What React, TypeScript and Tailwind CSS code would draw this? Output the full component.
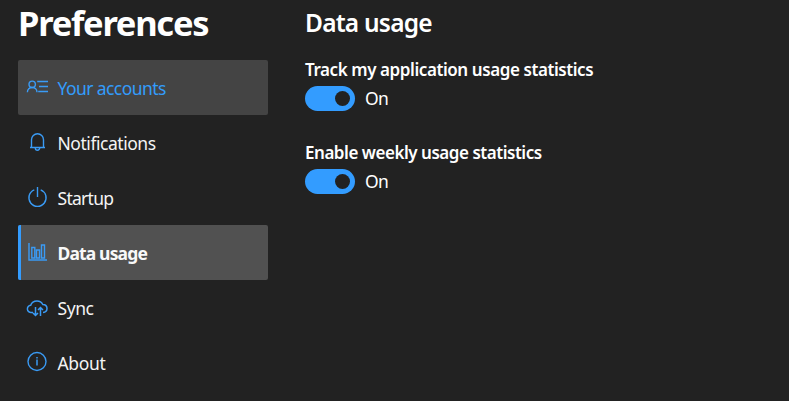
import type { ReactNode } from "react";

function Icon({ children }: { children: ReactNode }) {
  return (
    <svg width="22" height="22" viewBox="0 0 22 22" fill="none" stroke="#3a9bf5" strokeWidth="1.4" className="mb-px shrink-0">
      {children}
    </svg>
  );
}

const items = [
  {
    label: "Your accounts",
    row: "bg-[#444444]",
    text: "text-[#339cfb] tracking-[-0.58px]",
    icon: (
      <>
        <circle cx="6.2" cy="8.3" r="3.2" />
        <path d="M1.4 16.2c0-2.800 2.100-4.700 4.800-4.700s4.800 1.900 4.800 4.700M11.200 5.500H22M13 10.500h9M12.200 15.500H22" />
      </>
    ),
  },
  {
    label: "Notifications",
    row: "",
    text: "text-[#f4f4f4] tracking-[-0.46px]",
    icon: <path d="M4 16.500h15M5.500 16.500V8.800a6 6 0 0 1 12 0v7.700M9.300 17a2.200 2.200 0 0 0 4.400 0" />,
  },
  {
    label: "Startup",
    row: "",
    text: "text-[#f4f4f4] tracking-[-0.72px]",
    icon: <path d="M11.500 1v10M8.300 3.800a8.600 8.600 0 1 0 6.400 0" />,
  },
  {
    label: "Data usage",
    row: "bg-[#515151]",
    text: "font-bold text-[#f8f8f8] tracking-[-0.86px]",
    icon: <path d="M3 2v17H21M5.800 17V6.500h3V17zM10.500 17V9h3v8zM15.500 17V4h3v13z" />,
  },
  {
    label: "Sync",
    row: "",
    text: "text-[#f4f4f4] tracking-[-0.45px]",
    icon: (
      <path
        transform="translate(0 2)"
        strokeWidth="1.5"
        d="M7 14.500H5.300a3.500 3.500 0 0 1-.6-7.200c1-3.100 3.500-4.300 6.300-4.300s4.800 1.400 5.800 3.500c2.500.1 4.200 1.900 4.200 4 0 2.400-1.700 3.800-4 4M9.500 9v8.500M7 15l2.500 2.500L12 15M14.500 18V9.500M12 12l2.500-2.500L17 12"
      />
    ),
  },
  {
    label: "About",
    row: "",
    text: "text-[#f4f4f4] tracking-[-0.35px]",
    icon: (
      <>
        <circle cx="11" cy="10.500" r="9" />
        <path d="M11 8.500v6M11 6v1.500" strokeWidth="1.500" />
      </>
    ),
  },
];

function Setting({ label, spacing }: { label: string; spacing: string }) {
  return (
    <div className="h-[83px]">
      <h3 className={`h-[27px] text-[17px] leading-[22px] font-semibold whitespace-nowrap ${spacing}`}>{label}</h3>
      <div className="flex items-center gap-[10px]">
        <button role="switch" aria-checked="true" aria-label={label} className="flex h-[25px] w-[50px] items-center justify-end rounded-full bg-[#339cff] pr-[5px]">
          <span className="size-[15px] rounded-full bg-[#222222]" />
        </button>
        <span className="text-[17.500px] leading-[25px] tracking-[-0.600px]">On</span>
      </div>
    </div>
  );
}

export default function App() {
  return (
    <div className="flex h-[401px] w-[789px] overflow-hidden bg-[#222222] pl-[18px] font-['Noto_Sans',sans-serif] text-white">
      <aside className="w-[250px] shrink-0">
        <h1 className="h-[60px] text-[34.500px] leading-[46px] font-bold tracking-[-1.260px]">Preferences</h1>
        <nav>
          {items.map((item) => (
            <a key={item.label} className={`relative flex h-[55px] items-center overflow-hidden rounded-[2px] pl-[8px] ${item.row}`}>
              {item.label === "Data usage" && <span className="absolute inset-y-0 left-0 w-[3px] bg-[#339cff]" />}
              <Icon>{item.icon}</Icon>
              <span className={`pt-px pl-[9.500px] text-[17.500px] leading-6 whitespace-nowrap ${item.text}`}>{item.label}</span>
            </a>
          ))}
        </nav>
      </aside>
      <main className="ml-[37px]">
        <h2 className="h-[59px] text-[24.500px] leading-[46px] font-semibold tracking-[-0.780px]">Data usage</h2>
        <Setting label="Track my application usage statistics" spacing="tracking-[-0.420px]" />
        <Setting label="Enable weekly usage statistics" spacing="tracking-[-0.470px]" />
      </main>
    </div>
  );
}
